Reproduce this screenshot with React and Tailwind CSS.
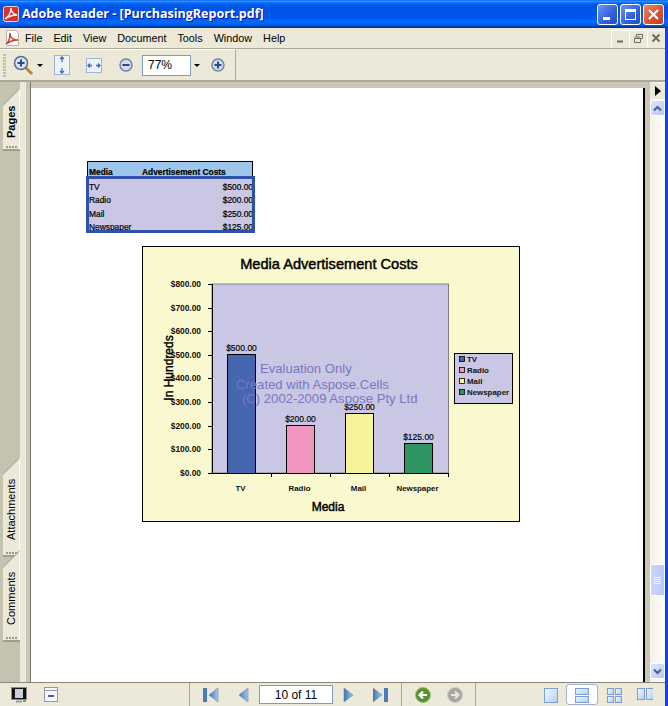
import React from 'react'

const MENU = ['File', 'Edit', 'View', 'Document', 'Tools', 'Window', 'Help']
const Y_TICKS = [
  ['$800.00', 284], ['$700.00', 308], ['$600.00', 331], ['$500.00', 355], ['$400.00', 378],
  ['$300.00', 402], ['$200.00', 426], ['$100.00', 449], ['$0.00', 473],
]
const BARS = [
  { name: 'TV', label: '$500.00', x: 227, top: 354, fill: '#4467b0' },
  { name: 'Radio', label: '$200.00', x: 286, top: 425, fill: '#f095c0' },
  { name: 'Mail', label: '$250.00', x: 345, top: 413, fill: '#f6f49b' },
  { name: 'Newspaper', label: '$125.00', x: 404, top: 443, fill: '#2e9560' },
]
const ROWS = [['TV', '$500.00'], ['Radio', '$200.00'], ['Mail', '$250.00'], ['Newspaper', '$125.00']]

function CaptionButton({ children, red }) {
  return (
    <div className={`w-[21px] h-[21px] rounded-[3px] border border-white flex items-center justify-center ${red ? 'bg-[linear-gradient(135deg,#e9876a,#d9512c_60%,#c23a17)]' : 'bg-[linear-gradient(135deg,#6f95ee,#2f5fdc_60%,#2350cc)]'}`}>
      {children}
    </div>
  )
}

function Chart() {
  // svg uses page coords shifted by the chart box origin (142, 246)
  return (
    <svg width="378" height="276" viewBox="142 246 378 276" className="block" style={{ fontFamily: '"Liberation Sans", Arial, sans-serif' }}>
      <rect x="142.5" y="246.5" width="377" height="275" fill="#f9f8cf" stroke="#000" />
      <rect x="212" y="284" width="236.5" height="189" fill="#c9c7e4" stroke="#808080" />
      {BARS.map((b) => (
        <rect key={b.name} x={b.x + 0.5} y={b.top + 0.5} width="28" height={473 - b.top} fill={b.fill} stroke="#000" />
      ))}
      <path d="M212.5 284v189.5H449M208 284.5h4M208 308.5h4M208 331.5h4M208 355.5h4M208 378.5h4M208 402.5h4M208 426.5h4M208 449.5h4M208 473.5h4M271.5 473v4M330.5 473v4M389.5 473v4M448.5 473v4" fill="none" stroke="#000" />
      {Y_TICKS.map(([t, y]) => (
        <text key={t} x="201" y={y + 3} textAnchor="end" fontSize="8.4" fontWeight="700" fill="#111">{t}</text>
      ))}
      {BARS.map((b) => (
        <text key={b.name} x={b.x + 14.5} y={b.top - 3} textAnchor="middle" fontSize="8.5" fill="#000" stroke="#000" strokeWidth="0.15">{b.label}</text>
      ))}
      {BARS.map((b) => (
        <text key={b.name} x={b.x + 13.5} y="491" textAnchor="middle" fontSize="7.9" fontWeight="700" fill="#111">{b.name}</text>
      ))}
      <text x="329" y="269" textAnchor="middle" fontSize="14.6" fill="#000" stroke="#000" strokeWidth="0.45">Media Advertisement Costs</text>
      <text x="328" y="511" textAnchor="middle" fontSize="12" fill="#000" stroke="#000" strokeWidth="0.45">Media</text>
      <text transform="translate(173 368) rotate(-90)" textAnchor="middle" fontSize="12" fill="#000" stroke="#000" strokeWidth="0.4">In Hundreds</text>
      <g fontSize="13.1" fill="#7777c2">
        <text x="260" y="373">Evaluation Only</text>
        <text x="236" y="389">Created with Aspose.Cells</text>
        <text x="242" y="403">(C) 2002-2009 Aspose Pty Ltd</text>
      </g>
      <rect x="454.5" y="353.5" width="58" height="50" fill="#c9c7e4" stroke="#000" />
      {BARS.map((b, i) => (
        <g key={b.name}>
          <rect x="459.5" y={356 + i * 11 + 0.5} width="5" height="5" fill={b.fill} stroke="#000" strokeWidth="0.8" />
          <text x="467" y={362 + i * 11} fontSize="7.9" fontWeight="700" fill="#111">{b.name}</text>
        </g>
      ))}
    </svg>
  )
}

function ReportTable() {
  return (
    <div className="w-[166px] text-[8.4px] text-black [-webkit-text-stroke:0.2px_#000]">
      <div className="h-[15px] bg-[#9ec6ea] border border-b-0 border-black flex items-end pl-[1px] leading-none">
        <span className="w-[53px] font-bold">Media</span>
        <span className="font-bold">Advertisement Costs</span>
      </div>
      <div className="h-[57px] -ml-[1px] -mr-[2px] bg-[#c9c7e4] border-[3px] border-[#2f52a8] overflow-hidden pt-[1px]">
        {ROWS.map(([name, cost]) => (
          <div key={name} className="h-[13.67px] flex items-center justify-between">
            <span>{name}</span>
            <span className="-mr-[1px]">{cost}</span>
          </div>
        ))}
      </div>
    </div>
  )
}

function Tab({ label, bold, h }) {
  return (
    <div className={`relative w-[17px] ml-[3px] ${h} bg-[#a09d8c] [clip-path:polygon(0_17px,100%_0,100%_100%,0_100%)]`}>
      <div className="absolute inset-0 bottom-[2px] bg-[#ece9d8] border-r border-[#fff] [clip-path:polygon(0_18px,100%_1px,100%_100%,0_100%)] flex flex-col items-center">
        <span className={`flex-1 pb-[12px] flex items-center justify-center [writing-mode:vertical-rl] rotate-180 text-[11px] text-black ${bold ? 'font-bold' : ''}`}>{label}</span>
        <div className="h-[5px] w-full flex items-center justify-center gap-[1px]">
          {[0, 1, 2, 3].map((i) => <span key={i} className="w-[2px] h-[2px] bg-[#9d9a88]" />)}
        </div>
      </div>
    </div>
  )
}

function ScrollBtn({ up }) {
  return (
    <div className="h-[16px] w-[15px] rounded-[2px] border border-white bg-[linear-gradient(135deg,#dbe5fd,#b7c9f8)] flex items-center justify-center">
      <svg width="9" height="7" viewBox="0 0 9 7">
        <path d={up ? 'M1 5.5 4.5 2 8 5.5' : 'M1 1.5 4.5 5 8 1.5'} fill="none" stroke="#4d6185" strokeWidth="2" />
      </svg>
    </div>
  )
}

function ViewIcon({ kind }) {
  const cells = {
    single: [[0, 0, 13, 14]],
    cont: [[0, 0, 13, 6], [0, 8, 13, 6]],
    grid: [[0, 0, 6, 6], [8, 0, 6, 6], [0, 8, 6, 6], [8, 8, 6, 6]],
    facing: [[0, 0, 7, 11], [9, 0, 7, 11]],
  }[kind]
  return (
    <svg width="17" height="16" viewBox="-1 -1 17 16">
      <defs>
        <linearGradient id="vg" x1="0" y1="0" x2="1" y2="1"><stop stopColor="#f4f8fe" /><stop offset="1" stopColor="#b3cdf0" /></linearGradient>
      </defs>
      {cells.map(([x, y, w, h], i) => (
        <rect key={i} x={x + 0.5} y={y + 0.5} width={w} height={h} fill="url(#vg)" stroke="#7b9fd2" />
      ))}
    </svg>
  )
}

function NavTriangle({ dir, bar }) {
  const left = dir === 'left'
  return (
    <svg width="16" height="16" viewBox="0 0 16 16" className="block">
      <defs>
        <linearGradient id="nv" x1="0" y1="0" x2="1" y2="0"><stop stopColor="#3d72ab" /><stop offset="1" stopColor="#a9c9ea" /></linearGradient>
      </defs>
      {bar && <rect x={left ? 0 : 11} y="1" width="4" height="14" fill="#4a7db5" />}
      <path d={left ? (bar ? 'M15 1v14L6 8z' : 'M14 1v14L5 8z') : (bar ? 'M0 1v14l9-7z' : 'M2 1v14l9-7z')} fill="url(#nv)" stroke="#5b8cc0" strokeWidth="0.6" />
    </svg>
  )
}

export default function App() {
  return (
    <div className="w-[668px] h-[706px] overflow-hidden flex flex-col bg-[#ece9d8] text-[11px] text-black" style={{ fontFamily: '"Liberation Sans", Arial, sans-serif' }}>
      {/* Title bar */}
      <div className="h-[28px] shrink-0 flex items-center pl-[3px] pr-[4px] bg-[linear-gradient(180deg,#0058ee_0%,#3593ff_4%,#288eff_6%,#127dff_8%,#036ffc_10%,#0262ee_14%,#0057e5_20%,#0054e3_24%,#0055eb_56%,#005bf5_66%,#026afe_76%,#0062ef_86%,#0052d6_92%,#0040ab_94%,#003092_100%)]">
        <svg width="16" height="16" viewBox="0 0 16 16" className="shrink-0">
          <rect x="0.5" y="0.5" width="15" height="15" rx="2" fill="#d8332a" stroke="#f3d0c8" />
          <path d="M2 13c3-2 6-6 6-11 0 3 2 6 6 7-4 0-8 1-12 4z" fill="none" stroke="#fff" strokeWidth="1.3" />
        </svg>
        <span className="ml-[3px] font-bold text-[12.5px] text-white [text-shadow:1px_1px_#0f1089]" style={{ fontFamily: '"Open Sans", sans-serif' }}>Adobe Reader - [PurchasingReport.pdf]</span>
        <div className="ml-auto flex gap-[2px]">
          <CaptionButton><span className="w-[7px] h-[3px] bg-white mt-[9px] -ml-[3px]" /></CaptionButton>
          <CaptionButton><span className="w-[11px] h-[11px] border border-t-[3px] border-white" /></CaptionButton>
          <CaptionButton red>
            <svg width="11" height="11" viewBox="0 0 11 11"><path d="M1 1l9 9M10 1l-9 9" stroke="#fff" strokeWidth="2" /></svg>
          </CaptionButton>
        </div>
      </div>

      {/* Everything under the title bar sits inside the blue right frame */}
      <div className="flex-1 min-h-0 flex flex-col border-r-[3px] border-[#0a48e0]">
        {/* Menu */}
        <div className="h-[20px] shrink-0 flex items-center border-b border-[#aca899] box-content">
          <svg width="17" height="18" viewBox="0 0 17 18" className="ml-[4px] shrink-0">
            <path d="M2.5 1.5h9l3 3v12h-12z" fill="#fff" stroke="#b9b5a5" />
            <path d="M2 15c3-2 4-6 4-11 0 4 2 7 8 7-5 0-8 1-12 4z" fill="none" stroke="#d3342b" strokeWidth="1.4" />
          </svg>
          <div className="ml-[4px] flex gap-[11px] text-[10.8px]">
            {MENU.map((m) => <span key={m}>{m}</span>)}
          </div>
          <div className="ml-auto flex gap-[1px] mr-[1px]">
            {['min', 'restore', 'close'].map((k) => (
              <div key={k} className="w-[17px] h-[17px] border-t border-l border-white flex items-center justify-center">
                <svg width="11" height="11" viewBox="0 0 11 11">
                  {k === 'min' && <path d="M2 8.5h6" stroke="#6d6a60" strokeWidth="2" />}
                  {k === 'restore' && <path d="M1.5 5.5h6v4h-6zM3.5 3.5v-2h6v4h-2M1.5 4h6" fill="none" stroke="#6d6a60" />}
                  {k === 'close' && <path d="M1.5 1.5l7 7M8.5 1.5l-7 7" stroke="#6d6a60" strokeWidth="2" />}
                </svg>
              </div>
            ))}
          </div>
        </div>

        {/* Toolbar */}
        <div className="h-[33px] shrink-0 flex border-b-2 border-[#aca899]">
          <div className="w-[236px] flex items-center pl-[3px] border-r border-[#aca899] border-t border-t-white">
            <div className="w-[3px] h-[23px] flex flex-col gap-[1px]">
              {Array.from({ length: 8 }).map((_, i) => <span key={i} className="h-[2px] bg-[#c1bdab]" />)}
            </div>
            <svg width="21" height="21" viewBox="0 0 21 21" className="ml-[7px]">
              <path d="M12 12l7 7" stroke="#b58a2c" strokeWidth="3" />
              <circle cx="8" cy="8" r="6.5" fill="#dbe3f4" stroke="#5a6c9a" strokeWidth="1.5" />
              <path d="M4.5 8h7M8 4.5v7" stroke="#2e4a86" strokeWidth="2" />
            </svg>
            <span className="ml-[3px] w-0 h-0 border-x-[3px] border-x-transparent border-t-[3px] border-t-black" />
            <svg width="16" height="20" viewBox="0 0 16 20" className="ml-[11px]">
              <rect x="0.5" y="0.5" width="15" height="19" fill="#eef3fb" stroke="#9db6d8" />
              <path d="M8 2v5M8 13v5M6 4l2-2 2 2M6 16l2 2 2-2" fill="none" stroke="#3b6ea5" strokeWidth="1.3" />
            </svg>
            <svg width="16" height="15" viewBox="0 0 16 15" className="ml-[16px]">
              <rect x="0.5" y="0.5" width="15" height="14" fill="#eef3fb" stroke="#9db6d8" />
              <path d="M2 7.5h4M10 7.5h4M4 5.5l-2 2 2 2M12 5.5l2 2-2 2" fill="none" stroke="#3b6ea5" strokeWidth="1.3" />
            </svg>
            <svg width="14" height="14" viewBox="0 0 14 14" className="ml-[17px]">
              <circle cx="7" cy="7" r="6" fill="#d3dcee" stroke="#6d7fa8" strokeWidth="1.4" />
              <path d="M3.5 7h7" stroke="#2e4a86" strokeWidth="2" />
            </svg>
            <div className="ml-[9px] w-[49px] h-[21px] bg-white border border-[#7f9db9] flex items-center pl-[5px] text-[12px]">77%</div>
            <span className="ml-[3px] w-0 h-0 border-x-[3px] border-x-transparent border-t-[3px] border-t-black" />
            <svg width="14" height="14" viewBox="0 0 14 14" className="ml-[11px]">
              <circle cx="7" cy="7" r="6" fill="#d3dcee" stroke="#6d7fa8" strokeWidth="1.4" />
              <path d="M3.5 7h7M7 3.5v7" stroke="#2e4a86" strokeWidth="2" />
            </svg>
          </div>
        </div>

        {/* Main area */}
        <div className="flex-1 min-h-0 flex bg-[#c9c6b5]">
          <div className="w-[20px] shrink-0 flex flex-col pt-[6px] bg-[#c5c2b0]">
            <Tab label="Pages" bold h="h-[63px]" />
            <div className="h-[306px]" />
            <Tab label="Attachments" h="h-[100px]" />
            <div className="-mt-[7px]">
              <Tab label="Comments" h="h-[92px]" />
            </div>
          </div>
          <div className="w-[6px] shrink-0 bg-[#ece9d8]" />
          <div className="w-[5px] shrink-0 bg-[#c9c6b5] border-r border-[#7a776a]" />

          <div className="flex-1 min-w-0 pt-[6px] bg-[#c9c6b5]">
            <div className="h-full bg-white border-r-2 border-black pl-[56px] pt-[73px]">
              <ReportTable />
              <div className="ml-[55px] mt-[13px] w-[378px]">
                <Chart />
              </div>
            </div>
          </div>

          {/* Scrollbar */}
          <div className="w-[5px] shrink-0 bg-[#c9c6b5]" />
          <div className="w-[15px] shrink-0 flex flex-col bg-[linear-gradient(90deg,#f3f1ea,#fefefb)]">
            <div className="h-[16px] mt-[1px] bg-[#ece9d8] flex items-center justify-center">
              <span className="w-0 h-0 border-y-[5px] border-y-transparent border-l-[6px] border-l-black" />
            </div>
            <div className="mt-[1px]"><ScrollBtn up /></div>
            <div className="flex-1 min-h-0 pt-[448px]">
              <div className="h-[32px] rounded-[2px] border border-white bg-[linear-gradient(90deg,#c9d6fb,#b7c9f8)] flex flex-col items-center justify-center gap-[1px]">
                {[0, 1, 2, 3].map((i) => <span key={i} className="w-[7px] h-[1px] bg-[#eef3fe]" />)}
              </div>
            </div>
            <div className="mb-[3px]"><ScrollBtn /></div>
          </div>
        </div>

        {/* Status bar */}
        <div className="h-[24px] shrink-0 flex items-center border-t border-[#8a8778]">
          <svg width="16" height="16" viewBox="0 0 16 16" className="ml-[11px]">
            <rect x="0.5" y="0.5" width="15" height="12" fill="#111" stroke="#8d8d8d" />
            <rect x="4" y="2" width="8" height="9" fill="#c9d0da" />
            <path d="M5 13.5h6v2H5z" fill="#9b9b9b" />
            <rect x="12" y="13" width="3" height="2" fill="#3fbf4c" />
          </svg>
          <svg width="14" height="15" viewBox="0 0 14 15" className="ml-[17px]">
            <rect x="0.5" y="0.5" width="13" height="14" fill="#f5f7fb" stroke="#8d9ab0" />
            <path d="M1 3.5h12" stroke="#8d9ab0" />
            <path d="M4 9h6" stroke="#3f5f9e" strokeWidth="2" />
          </svg>
          <div className="ml-[131px] w-px h-full bg-[#aca899]" />
          <div className="ml-[13px]"><NavTriangle dir="left" bar /></div>
          <div className="ml-[15px]"><NavTriangle dir="left" /></div>
          <div className="ml-[9px] w-[74px] h-[19px] bg-white border border-[#7f9db9] flex items-center justify-center text-[12px]">10 of 11</div>
          <div className="ml-[9px]"><NavTriangle dir="right" /></div>
          <div className="ml-[15px]"><NavTriangle dir="right" bar /></div>
          <div className="ml-[12px] w-px h-full bg-[#aca899]" />
          <svg width="16" height="16" viewBox="0 0 16 16" className="ml-[13px]">
            <circle cx="8" cy="8" r="7.5" fill="#5a8f2d" stroke="#9bbd7d" />
            <path d="M12 8H5M8 4.5 4.5 8 8 11.5" fill="none" stroke="#fff" strokeWidth="2.2" />
          </svg>
          <svg width="16" height="16" viewBox="0 0 16 16" className="ml-[16px]">
            <circle cx="8" cy="8" r="7.5" fill="#a8a79f" stroke="#cbcac3" />
            <path d="M4 8h7M8 4.5 11.5 8 8 11.5" fill="none" stroke="#e6e5df" strokeWidth="2.2" />
          </svg>
          <div className="ml-[12px] w-px h-full bg-[#aca899]" />
          <div className="ml-[67px]"><ViewIcon kind="single" /></div>
          <div className="ml-[6px] w-[32px] h-[21px] rounded-[3px] bg-white border border-[#9fb4cf] flex items-center justify-center"><ViewIcon kind="cont" /></div>
          <div className="ml-[8px]"><ViewIcon kind="grid" /></div>
          <div className="ml-[13px]"><ViewIcon kind="facing" /></div>
        </div>
      </div>
    </div>
  )
}
